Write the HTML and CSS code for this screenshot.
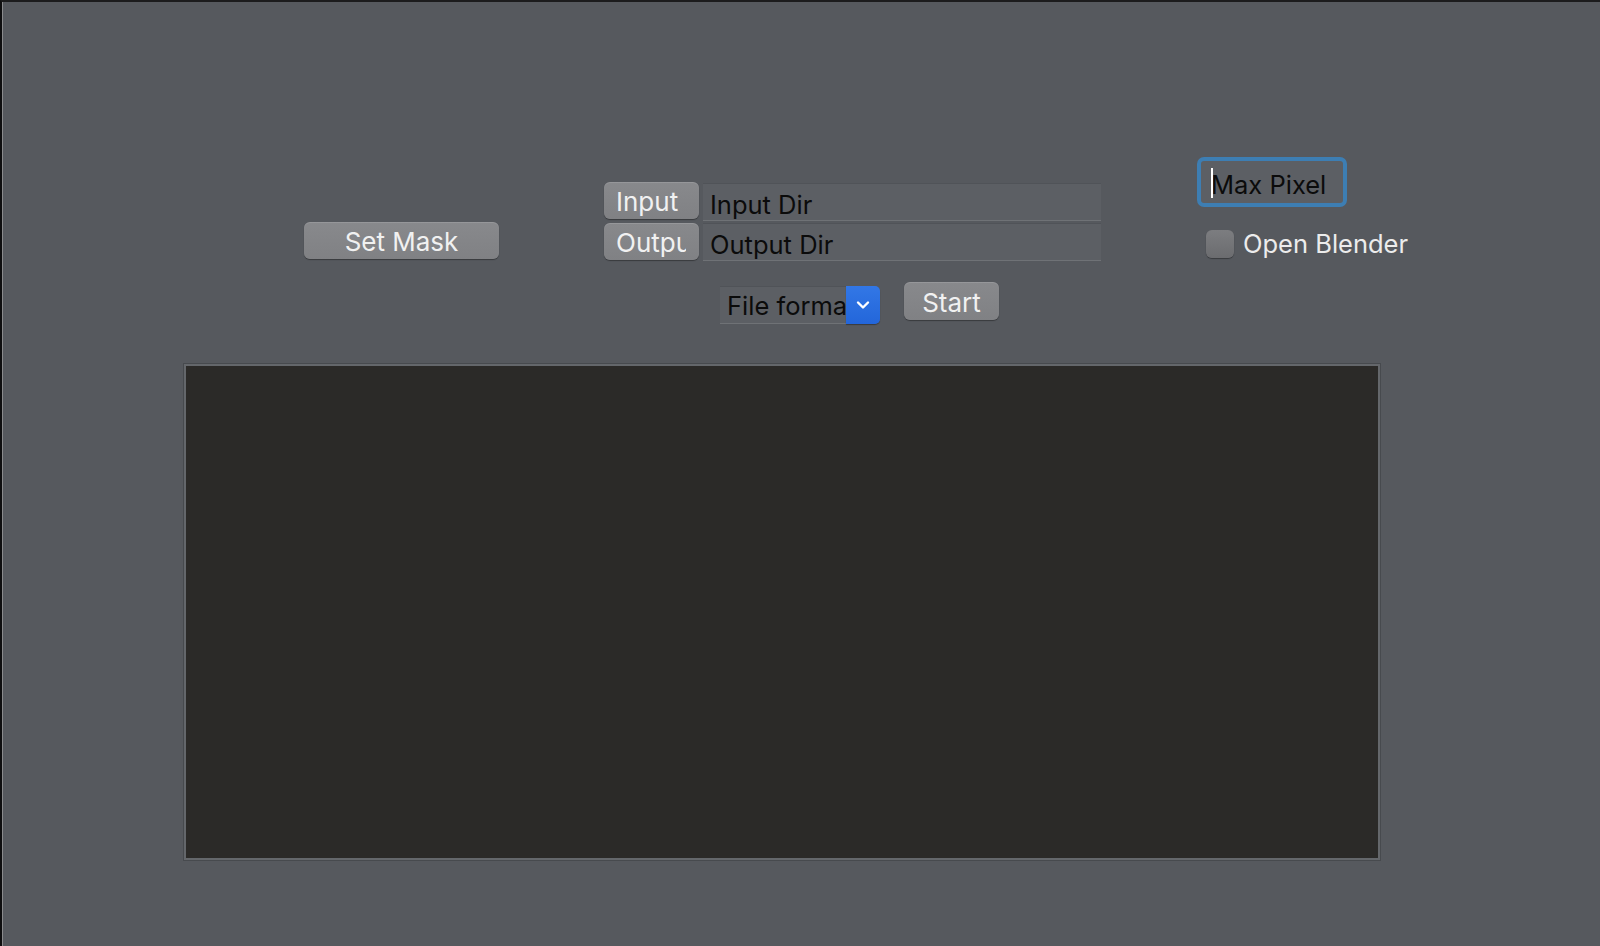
FILE: index.html
```html
<!DOCTYPE html>
<html>
<head>
<meta charset="utf-8">
<title>Mask Tool</title>
<link rel="stylesheet" href="styles.css">
</head>
<body>
<div class="window">
  <div class="top">
    <button class="btn setmask">Set Mask</button>
    <div class="io">
      <button class="btn iobtn first"><span class="clip">Input</span></button>
      <div class="field first">Input Dir</div>
      <button class="btn iobtn"><span class="clip">Output</span></button>
      <div class="field">Output Dir</div>
    </div>
    <div class="right">
      <div class="maxpixel"><span class="caret"></span><span>Max Pixel</span></div>
      <label class="check-row"><span class="checkbox"></span><span class="check-label">Open Blender</span></label>
    </div>
  </div>
  <div class="row2">
    <div class="select">
      <span class="select-text">File format</span>
      <span class="select-arrow">
        <svg width="14" height="10" viewBox="0 0 14 10"><path d="M2 2.5 L7 7.5 L12 2.5" fill="none" stroke="#ffffff" stroke-width="2.4" stroke-linecap="round" stroke-linejoin="round"/></svg>
      </span>
    </div>
    <button class="btn start">Start</button>
  </div>
  <div class="canvas"></div>
</div>
</body>
</html>
```
FILE: styles.css
```css
html, body {
  margin: 0;
  padding: 0;
  background: #56595e;
}
body {
  font-family: "Inter", "Liberation Sans", sans-serif;
  font-size: 26px;
}
.window {
  width: 1600px;
  height: 946px;
  box-sizing: border-box;
  border-top: 2px solid #1c1c1d;
  border-left: 2px solid #0f0f10;
  box-shadow: inset 1px 0 0 #8a8b8d;
  padding-top: 155px;
  background: #56595e;
}
.top {
  display: flex;
  align-items: flex-start;
}
.btn {
  font-family: inherit;
  font-size: 26px;
  color: #f1f1f1;
  background: linear-gradient(#88898c, #808184);
  border: none;
  border-radius: 6px;
  box-shadow: 0 1px 1px rgba(0, 0, 0, 0.35), inset 0 1px 0 rgba(255, 255, 255, 0.12);
  padding: 2px 0 0 0;
  height: 37px;
  box-sizing: border-box;
  display: flex;
  align-items: center;
  justify-content: center;
}
.setmask {
  margin-left: 302px;
  margin-top: 65px;
  width: 195px;
}
.io {
  margin-left: 105px;
  margin-top: 25px;
  display: grid;
  grid-template-columns: 95px 398px;
  column-gap: 4px;
  row-gap: 2px;
}
.iobtn {
  width: 95px;
  justify-content: flex-start;
  padding-left: 12px;
}
.iobtn.first {
  height: 37px;
  margin-bottom: 2px;
}
.clip {
  display: block;
  width: 70px;
  overflow: hidden;
  white-space: nowrap;
  text-align: left;
}
.field {
  height: 38px;
  box-sizing: border-box;
  background: #5c5f64;
  border-top: 1px solid #505358;
  border-bottom: 1px solid #6f7276;
  padding-left: 7px;
  display: flex;
  align-items: center;
  padding-top: 5px;
  color: #0b0b0b;
  font-size: 25.5px;
}
.field.first {
  margin-top: 1px;
}
.right {
  margin-left: 96px;
  display: flex;
  flex-direction: column;
}
.maxpixel {
  width: 150px;
  height: 50px;
  box-sizing: border-box;
  border: 4px solid #3d7eb3;
  border-radius: 7px;
  background: #5c5f64;
  display: flex;
  align-items: center;
  padding-left: 10px;
  padding-top: 5px;
  color: #0b0b0b;
  font-size: 25.5px;
  position: relative;
}
.caret {
  position: absolute;
  left: 10px;
  top: 7px;
  width: 2px;
  height: 30px;
  background: #ffffff;
}
.check-row {
  margin-top: 21px;
  margin-left: 9px;
  display: flex;
  align-items: center;
}
.checkbox {
  width: 28px;
  height: 28px;
  box-sizing: border-box;
  border-radius: 6px;
  background: linear-gradient(#7c7d80, #6b6c6f);
  box-shadow: 0 1px 1px rgba(0, 0, 0, 0.35);
}
.check-label {
  margin-left: 9px;
  color: #ececec;
  font-size: 25.5px;
}
.row2 {
  display: flex;
  align-items: flex-start;
  margin-top: 21px;
  margin-left: 718px;
}
.select {
  margin-top: 4px;
  width: 160px;
  height: 38px;
  display: flex;
  box-sizing: border-box;
}
.select-text {
  flex: 1;
  background: #5c5f64;
  border-top: 1px solid #505358;
  border-bottom: 1px solid #6f7276;
  box-sizing: border-box;
  padding-left: 7px;
  padding-top: 1px;
  overflow: hidden;
  white-space: nowrap;
  color: #0b0b0b;
  font-size: 25.5px;
  display: flex;
  align-items: center;
}
.select-arrow {
  width: 34px;
  height: 38px;
  background: linear-gradient(#3277e6, #2366da);
  border-radius: 0 5px 5px 0;
  display: flex;
  align-items: center;
  justify-content: center;
  box-shadow: 0 1px 1px rgba(0, 0, 0, 0.35);
}
.start {
  margin-left: 24px;
  width: 95px;
  height: 38px;
}
.canvas {
  margin-top: 39px;
  margin-left: 181px;
  width: 1198px;
  height: 498px;
  box-sizing: border-box;
  background: #2b2a28;
  border: 1px solid #474a4e;
  box-shadow: inset 0 0 0 2px #64676b;
}
```
